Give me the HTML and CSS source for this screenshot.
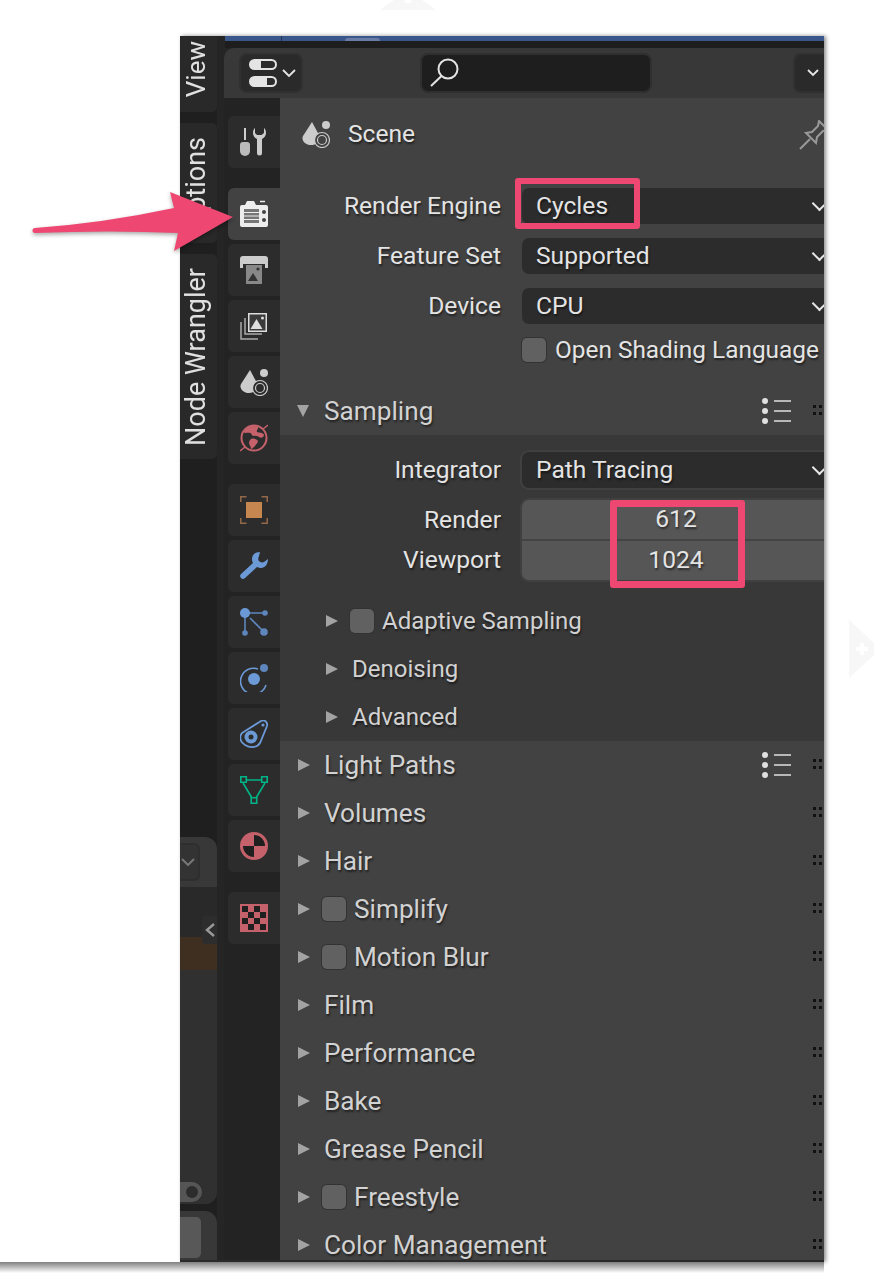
FILE: index.html
```html
<!DOCTYPE html>
<html lang="en">
<head>
  <meta charset="UTF-8" />
  <title>Render properties</title>
  <link rel="stylesheet" href="styles.css">
</head>
<body>

  <div class="window">
    <!-- left strip of the viewport sidebar -->
    <aside class="side">
      <div class="vtab vtab-view"><span>View</span></div>
      <div class="vtab vtab-options"><span>Options</span></div>
      <div class="vtab vtab-wrangler"><span>Node Wrangler</span></div>
      <div class="side-fill"></div>
      <div class="lower">
        <div class="lower-head"><div class="lower-select"><svg width="14" height="8" viewBox="0 0 14 8"><path d="M1 1l6 6 6-6" fill="none" stroke="#777" stroke-width="2"/></svg></div></div>
        <div class="lower-list">
          <div class="lower-gap"></div>
          <div class="lower-orange"></div>
          <div class="lower-rest"></div>
          <div class="lower-arrow"><svg width="12" height="16" viewBox="0 0 12 16"><path d="M10 2L3 8l7 6" fill="none" stroke="#999" stroke-width="2.4"/></svg></div>
          <div class="lower-toggle"></div>
        </div>
      </div>
      <div class="lower-btn"><div class="lower-btn-in"></div></div>
    </aside>

    <div class="props">
      <div class="topstrip"><i class="topstrip-tab"></i></div>
      <div class="topbar">
        <div class="editor-btn">
          <svg width="28" height="28" viewBox="0 0 28 28">
            <path d="M5.500 0h17a5.500 5.500 0 0 1 0 11h-17a5.500 5.500 0 0 1 0-11z" fill="#e4e4e4"/>
            <path d="M12 2h10.500a3.500 3.500 0 0 1 0 7H12z" fill="#2c2c2c"/>
            <path d="M5.500 17h17a5.500 5.500 0 0 1 0 11h-17a5.500 5.500 0 0 1 0-11z" fill="#e4e4e4"/>
            <path d="M18 19h4.500a3.500 3.500 0 0 1 0 7H18z" fill="#2c2c2c"/>
          </svg>
          <svg class="chev-small" width="14" height="9" viewBox="0 0 14 9"><path d="M1 1l6 6 6-6" fill="none" stroke="#e6e6e6" stroke-width="1.800"/></svg>
        </div>
        <div class="search">
          <svg width="30" height="30" viewBox="0 0 30 30"><circle cx="18" cy="11" r="9.500" fill="none" stroke="#e4e4e4" stroke-width="2"/><path d="M11.500 18L1 28" stroke="#e4e4e4" stroke-width="2" fill="none"/></svg>
        </div>
        <div class="options-btn"><svg width="12" height="8" viewBox="0 0 12 8"><path d="M1 1l5 5 5-5" fill="none" stroke="#e6e6e6" stroke-width="1.800"/></svg></div>
      </div>

      <div class="props-body">
        <nav class="tabs">
          <a class="tab tab-tool">
            <svg width="28" height="28" viewBox="0 0 28 28"><path d="M5 0v12" stroke="#ccc" stroke-width="2"/><path d="M0 17a3 3 0 0 1 3-3h4a3 3 0 0 1 3 3v6a5 5 0 0 1-10 0z" fill="#bbb"/><path d="M15 0c-1.500 1-2 3-2 5 0 3 2 5 4 6v14a2.500 2.500 0 0 0 5 0V11c2-1 4-3 4-6 0-2-.5-4-2-5v5l-2.500 2h-4.500L15 5z" fill="#ccc"/></svg>
          </a>
          <a class="tab tab-active">
            <svg width="28" height="28" viewBox="0 0 28 28"><path d="M0 7a2 2 0 0 1 2-2h3l2-4h7l2 4h10a2 2 0 0 1 2 2v18a2 2 0 0 1-2 2H2a2 2 0 0 1-2-2z" fill="#ededed"/><path d="M20 1.500h5" stroke="#ededed" stroke-width="1.500"/><rect x="4" y="9" width="15" height="14" fill="#777"/><path d="M4 12.500h15M4 16h15M4 19.500h15" stroke="#ededed" stroke-width="1.200"/><circle cx="24" cy="12" r="2" fill="#444"/><circle cx="24" cy="20" r="2" fill="#444"/></svg>
          </a>
          <a class="tab">
            <svg width="28" height="28" viewBox="0 0 28 28"><path d="M0 3a3 3 0 0 1 3-3h22a3 3 0 0 1 3 3v9h-3V7H3v5H0z" fill="#ccc"/><rect x="0" y="3" width="28" height="5" fill="#ccc"/><rect x="6" y="9" width="16" height="19" fill="#888"/><path d="M8 25l5-8 5 8z" fill="#333"/><circle cx="18" cy="13" r="1.600" fill="#333"/></svg>
          </a>
          <a class="tab">
            <svg width="28" height="28" viewBox="0 0 28 28"><rect x="8" y="1" width="19" height="19" fill="#ddd"/><rect x="9.500" y="2.500" width="16" height="16" fill="#3a3a3a"/><path d="M10.500 17l6-10 6 10z" fill="#ddd"/><circle cx="22.500" cy="6" r="1.500" fill="#ddd"/><path d="M5 6v16h17M1 10v17h17" fill="none" stroke="#aaa" stroke-width="1.500"/></svg>
          </a>
          <a class="tab">
            <svg width="28" height="28" viewBox="0 0 28 28"><path d="M10 2l7 13c1 5-2 10-8 10-6 0-10-5-8-9z" fill="#ccc"/><circle cx="24" cy="5" r="4" fill="#ccc"/><circle cx="20" cy="20" r="7.500" fill="#2c2c2c" stroke="#ccc" stroke-width="1.200"/><circle cx="20" cy="20" r="4.500" fill="none" stroke="#ccc" stroke-width="1.200"/></svg>
          </a>
          <a class="tab">
            <svg width="28" height="28" viewBox="0 0 28 28"><circle cx="14" cy="14" r="12.500" fill="none" stroke="#c5616b" stroke-width="2"/><path d="M23 5l5-4M5 23l-5 4" stroke="#c5616b" stroke-width="1.500"/><path d="M6 4c3-2 8-3 12-1 1 2-2 3-1 5 2 1 6 0 7 3 0 2-2 2-3 3-2-1-5-3-8-2-2-1-1-3-3-3-2-1-5 1-6-1 0-2 1-3 2-4zM11 15c3-1 6 0 7 2 0 2-2 3-3 5-2 2-3 3-4 3 0-3-2-4-2-6 0-2 1-3 2-4z" fill="#c5616b"/></svg>
          </a>
          <a class="tab tab-gap">
            <svg width="28" height="28" viewBox="0 0 28 28"><path d="M.800 6V.800H6.500M21.500 .800h5.700V6M27.200 22v5.200h-5.700M6.500 27.200H.800V22" fill="none" stroke="#94694a" stroke-width="1.500"/><rect x="6" y="6" width="16" height="16" fill="#c6864f"/></svg>
          </a>
          <a class="tab">
            <svg width="28" height="28" viewBox="0 0 28 28"><path d="M20 0c-5 0-8 3-8 7 0 2 .5 3 1 4L1 22a3 3 0 0 0 0 4 3 3 0 0 0 4 0l12-11c1 .5 3 1 4 1 4 0 7-4 7-9l-4 3c-2 1-4 0-5-1s-1-3 0-5z" fill="#6b9ad6"/></svg>
          </a>
          <a class="tab">
            <svg width="28" height="28" viewBox="0 0 28 28"><path d="M6 5h20M5 6v18M10 10l14 14" stroke="#5e86bd" stroke-width="1.600" fill="none"/><circle cx="5" cy="5" r="5" fill="#6b9ad6"/><circle cx="25" cy="5" r="2.800" fill="#5e86bd"/><circle cx="5" cy="25" r="2.800" fill="#5e86bd"/><circle cx="24" cy="24" r="3.800" fill="#5e86bd"/></svg>
          </a>
          <a class="tab">
            <svg width="28" height="28" viewBox="0 0 28 28"><path d="M18 5A13 13 0 1 0 26 21" fill="none" stroke="#6b9ad6" stroke-width="1.600"/><circle cx="14" cy="15" r="6" fill="#6b9ad6"/><circle cx="24" cy="4" r="4" fill="#5e86bd"/></svg>
          </a>
          <a class="tab">
            <svg width="28" height="28" viewBox="0 0 28 28"><path d="M2 13L21 1c3-2 7 1 6 5L20 23c-3 5-10 5-15 2S-1 17 2 13z" fill="#2c2c2c" stroke="#6b9ad6" stroke-width="1.800"/><circle cx="11" cy="17" r="6.500" fill="#6b9ad6"/><circle cx="11" cy="17" r="2.500" fill="#2c2c2c"/><circle cx="23" cy="5" r="1.600" fill="#6b9ad6"/></svg>
          </a>
          <a class="tab">
            <svg width="28" height="28" viewBox="0 0 28 28"><path d="M6 4h16M3 7l9 15M25 7l-9 15" stroke="#00b488" stroke-width="1.600" fill="none"/><path d="M.800 .800h5.500v5.500H.800zM21.700 .800h5.500v5.500h-5.500zM11.200 21.700h5.500v5.500h-5.500z" fill="none" stroke="#00b488" stroke-width="1.600"/></svg>
          </a>
          <a class="tab">
            <svg width="28" height="28" viewBox="0 0 28 28"><circle cx="14" cy="14" r="14" fill="#c5616b"/><path d="M14 14V3a11 11 0 0 1 11 11zM14 14H3a11 11 0 0 0 11 11z" fill="#1f1f1f"/></svg>
          </a>
          <a class="tab tab-gap">
            <svg width="28" height="28" viewBox="0 0 28 28"><rect width="28" height="28" fill="#c5616b"/><path d="M2 2h6v6H2zM14 2h6v6h-6zM8 8h6v6H8zM20 8h6v6h-6zM2 14h6v6H2zM14 14h6v6h-6zM8 20h6v6H8zM20 20h6v6h-6z" fill="#1f1f1f"/></svg>
          </a>
        </nav>

        <main class="panel">
          <div class="context">
            <svg width="28" height="28" viewBox="0 0 28 28"><path d="M10 2l7 13c1 5-2 10-8 10-6 0-10-5-8-9z" fill="#ccc"/><circle cx="24" cy="5" r="4" fill="#ccc"/><circle cx="20" cy="20" r="7.500" fill="#424242" stroke="#ccc" stroke-width="1.200"/><circle cx="20" cy="20" r="4.500" fill="none" stroke="#ccc" stroke-width="1.200"/></svg>
            <span class="context-name">Scene</span>
            <svg class="pin" width="30" height="30" viewBox="0 0 30 30"><path d="M20 1l9 9-5 1-6 6-1 6-10-10 6-1 6-6z" fill="none" stroke="#999" stroke-width="2"/><path d="M11 19L1 29" stroke="#999" stroke-width="2"/></svg>
          </div>

          <div class="form form-engine">
            <div class="row"><label>Render Engine</label><div class="select"><span>Cycles</span></div></div>
            <div class="row"><label>Feature Set</label><div class="select"><span>Supported</span></div></div>
            <div class="row"><label>Device</label><div class="select"><span>CPU</span></div></div>
            <div class="row-check"><i class="check"></i><span>Open Shading Language</span></div>
          </div>

          <div class="head head-open">
            <i class="tri tri-down"></i><span>Sampling</span>
            <span class="presets"><i></i><i></i><i></i></span><i class="grip"></i>
          </div>
          <div class="sub">
            <div class="row"><label>Integrator</label><div class="select"><span>Path Tracing</span></div></div>
            <div class="numbers">
              <div class="num-labels"><label>Render</label><label>Viewport</label></div>
              <div class="num-box"><div class="num">612</div><div class="num">1024</div></div>
            </div>
            <div class="subhead subhead-first"><i class="tri"></i><i class="check"></i><span>Adaptive Sampling</span></div>
            <div class="subhead"><i class="tri"></i><span>Denoising</span></div>
            <div class="subhead"><i class="tri"></i><span>Advanced</span></div>
          </div>

          <div class="head"><i class="tri"></i><span>Light Paths</span><span class="presets"><i></i><i></i><i></i></span><i class="grip"></i></div>
          <div class="head"><i class="tri"></i><span>Volumes</span><i class="grip"></i></div>
          <div class="head"><i class="tri"></i><span>Hair</span><i class="grip"></i></div>
          <div class="head head-check"><i class="tri"></i><i class="check"></i><span>Simplify</span><i class="grip"></i></div>
          <div class="head head-check"><i class="tri"></i><i class="check"></i><span>Motion Blur</span><i class="grip"></i></div>
          <div class="head"><i class="tri"></i><span>Film</span><i class="grip"></i></div>
          <div class="head"><i class="tri"></i><span>Performance</span><i class="grip"></i></div>
          <div class="head"><i class="tri"></i><span>Bake</span><i class="grip"></i></div>
          <div class="head"><i class="tri"></i><span>Grease Pencil</span><i class="grip"></i></div>
          <div class="head head-check"><i class="tri"></i><i class="check"></i><span>Freestyle</span><i class="grip"></i></div>
          <div class="head"><i class="tri"></i><span>Color Management</span><i class="grip"></i></div>
        </main>
      </div>
    </div>
  </div>

  <!-- annotations on top of the screenshot -->
  <div class="mark mark-engine"></div>
  <div class="mark mark-samples"></div>
  <svg class="arrow" width="210" height="70" viewBox="0 0 210 70"><path d="M5 40Q74 35 144 20L140 4 203 29 144 63 148 45Q81 42 5 45a2.500 2.500 0 0 1 0-5z" fill="#ee4771"/></svg>

  <!-- faint page decorations -->
  <div class="bottom-shadow"></div>
  <svg class="deco-top" width="56" height="10" viewBox="0 0 56 10"><path d="M14 0h28l14 10H0z" fill="#f7f7f7"/><path d="M25 0h6v3h-6z" fill="#fff"/></svg>
  <svg class="deco-right" width="26" height="58" viewBox="0 0 26 58"><path d="M0 0l25 23v12L0 58z" fill="#f7f7f7"/><path d="M7 27h4v-4h4v4h4v4h-4v4h-4v-4H7z" fill="#fff"/></svg>

</body>
</html>
```

FILE: styles.css
```css
* {
  box-sizing: border-box;
  margin: 0;
  padding: 0;
}

html, body {
  height: 100%;
}

body {
  background: #fff;
  font-family: Roboto, sans-serif;
  color: #e4e4e4;
  overflow: hidden;
  position: relative;
  padding: 36px 50px 14px 180px;
}

/* Window */
.window {
  width: 644px;
  height: 1226px;
  background: #252525;
  border-bottom: 2px solid #2a2a2a;
  display: flex;
  overflow: hidden;
  box-shadow: 2px 0 4px rgba(0,0,0,0.45);
}

/* Left strip */
.side {
  width: 37px;
  flex: none;
  display: flex;
  flex-direction: column;
  background: #1f1f1f;
}
.vtab {
  flex: none;
  background: #292929;
  border-radius: 0 0 5px 0;
  display: flex;
  align-items: center;
  justify-content: center;
  padding-right: 6px;
  overflow: hidden;
}
.vtab span {
  writing-mode: vertical-rl;
  transform: rotate(180deg);
  font-size: 27px;
  white-space: nowrap;
  color: #e0e0e0;
}
.vtab-view {
  height: 76px;
  align-items: flex-start;
  padding-top: 5px;
}
.vtab-view span {
  font-size: 26px;
}
.vtab-options {
  height: 120px;
  margin-top: 11px;
  border-radius: 0 5px 5px 0;
  align-items: flex-start;
  padding-top: 14px;
}
.vtab-wrangler {
  height: 205px;
  margin-top: 11px;
  border-radius: 0 5px 5px 0;
}
.side-fill {
  height: 378px;
  flex: none;
}
.lower {
  height: 367px;
  flex: none;
  background: #383838;
  border-radius: 0 12px 12px 0;
  display: flex;
  flex-direction: column;
  overflow: hidden;
}
.lower-head {
  height: 50px;
  flex: none;
  padding-top: 6px;
}
.lower-select {
  width: 20px;
  height: 38px;
  background: #333;
  border: 2px solid #2e2e2e;
  border-left: 0;
  border-radius: 0 6px 6px 0;
  display: flex;
  align-items: center;
  padding-left: 1px;
}
.lower-list {
  flex: 1;
  background: #292929;
  position: relative;
  display: flex;
  flex-direction: column;
}
.lower-gap {
  height: 50px;
  flex: none;
}
.lower-orange {
  height: 33px;
  flex: none;
  background: #3f2f20;
}
.lower-rest {
  flex: 1;
  background: #303030;
}
.lower-arrow {
  position: absolute;
  left: 22px;
  top: 29px;
  width: 15px;
  height: 28px;
  background: #2d2d2d;
  border-radius: 4px 0 0 4px;
  display: flex;
  align-items: center;
  justify-content: center;
}
.lower-toggle {
  position: absolute;
  left: 0;
  bottom: 2px;
  width: 22px;
  height: 20px;
  background: #555;
  border-radius: 0 10px 10px 0;
}
.lower-toggle::after {
  content: "";
  position: absolute;
  left: 6px;
  top: 4px;
  width: 12px;
  height: 12px;
  border-radius: 50%;
  background: #2c2c2c;
}
.lower-btn {
  height: 49px;
  margin-top: 7px;
  flex: none;
  background: #383838;
  border-radius: 0 12px 0 0;
  padding: 6px 0 2px;
}
.lower-btn-in {
  width: 21px;
  height: 41px;
  background: #585858;
  border-radius: 0 5px 5px 0;
}

/* Properties editor */
.props {
  flex: 1;
  min-width: 0;
  margin-left: 7px;
  display: flex;
  flex-direction: column;
}
.topstrip {
  height: 12px;
  flex: none;
  background: #1d1d1d;
  border-top: 5px solid #3a578c;
  margin-left: 1px;
  position: relative;
}
.topstrip::before {
  content: "";
  position: absolute;
  left: 56px;
  top: -5px;
  width: 1px;
  height: 5px;
  background: #24324d;
}
.topstrip-tab {
  position: absolute;
  left: 120px;
  top: -3px;
  width: 35px;
  height: 3px;
  background: #6a7da6;
  border-radius: 6px 6px 0 0;
}
.topbar {
  height: 50px;
  flex: none;
  background: #383838;
  border-radius: 10px 0 0 0;
  display: flex;
  align-items: center;
  padding-left: 15px;
}
.editor-btn {
  width: 64px;
  height: 40px;
  background: #2a2a2a;
  border: 2px solid #303030;
  border-radius: 8px;
  display: flex;
  align-items: center;
  padding-left: 8px;
  gap: 5px;
}
.search {
  width: 232px;
  height: 40px;
  margin-left: 117px;
  background: #1e1e1e;
  border: 2px solid #2f2f2f;
  border-radius: 8px;
  display: flex;
  align-items: center;
  padding-left: 8px;
}
.options-btn {
  flex: 1;
  height: 40px;
  margin-left: 141px;
  background: #2a2a2a;
  border: 2px solid #303030;
  border-right: 0;
  border-radius: 8px 0 0 8px;
  display: flex;
  align-items: center;
  padding-left: 12px;
}
.props-body {
  flex: 1;
  display: flex;
  min-height: 0;
}

/* Icon tabs */
.tabs {
  width: 56px;
  flex: none;
  display: flex;
  flex-direction: column;
  gap: 4px;
  padding: 18px 0 0 4px;
  background: #232323;
}
.tab {
  height: 52px;
  background: #2c2c2c;
  border-radius: 6px 0 0 6px;
  display: flex;
  align-items: center;
  padding-left: 12px;
}
.tab-active {
  background: #424242;
  margin-top: 16px;
}
.tab-gap {
  margin-top: 16px;
}

/* Main panel */
.panel {
  flex: 1;
  min-width: 0;
  background: #424242;
  overflow: hidden;
  font-size: 24.6px;
  text-shadow: 1px 2px 2px rgba(0,0,0,0.5);
}
.context {
  height: 72px;
  display: flex;
  align-items: center;
  padding-left: 22px;
  position: relative;
}
.context-name {
  margin-left: 18px;
  padding-bottom: 2px;
  color: #e4e4e4;
}
.pin {
  position: absolute;
  left: 519px;
  top: 22px;
}
.form-engine {
  padding-top: 18px;
}
.row {
  display: flex;
  align-items: center;
  height: 36px;
  margin-bottom: 14px;
}
.row label,
.num-labels label {
  width: 221px;
  flex: none;
  text-align: right;
  color: #e4e4e4;
}
.row label,
.select span,
.row-check span {
  padding-bottom: 2px;
}
.select {
  flex: 1;
  height: 36px;
  margin-left: 21px;
  background: #2c2c2c;
  border-radius: 7px 0 0 7px;
  display: flex;
  align-items: center;
  padding-left: 14px;
  position: relative;
}
.select::after {
  content: "";
  position: absolute;
  right: -1px;
  top: 10px;
  width: 9px;
  height: 9px;
  border-right: 2px solid #e6e6e6;
  border-bottom: 2px solid #e6e6e6;
  transform: rotate(45deg);
}
.sub .select {
  box-shadow: 0 0 0 2px #404040;
}
.row-check {
  display: flex;
  align-items: center;
  height: 24px;
  margin-left: 242px;
  gap: 9px;
  font-size: 24.4px;
  white-space: nowrap;
}
.check {
  width: 24px;
  height: 24px;
  flex: none;
  background: #616161;
  border-radius: 5px;
  box-shadow: 0 0 0 1px #333;
}

/* Panel headers */
.head {
  height: 48px;
  display: flex;
  align-items: center;
  padding-left: 18px;
  font-size: 26.2px;
  color: #d2d2d2;
  position: relative;
  white-space: nowrap;
}
.head-open {
  margin-top: 25px;
}
.head > span:first-of-type {
  margin-left: 14px;
}
.head-check .check {
  margin-left: 12px;
}
.head-check > span:first-of-type {
  margin-left: 8px;
}
.tri {
  width: 0;
  height: 0;
  flex: none;
  border-left: 12px solid #a3a3a3;
  border-top: 6.500px solid transparent;
  border-bottom: 6.500px solid transparent;
}
.tri-down {
  margin-left: -1px;
  margin-right: 1px;
  border-top: 12px solid #a3a3a3;
  border-left: 6.500px solid transparent;
  border-right: 6.500px solid transparent;
  border-bottom: 0;
}
.presets {
  position: absolute;
  left: 482px;
  top: 11px;
  width: 29px;
  height: 26px;
  display: flex;
  flex-direction: column;
  justify-content: space-between;
}
.presets i {
  display: block;
  height: 2px;
  margin: 2px 0 2px 12px;
  background: #b8b8b8;
  position: relative;
}
.presets i::before {
  content: "";
  position: absolute;
  left: -12px;
  top: -2px;
  width: 6px;
  height: 6px;
  border-radius: 50%;
  background: #e0e0e0;
}
.grip {
  position: absolute;
  left: 533px;
  top: 18px;
  width: 9px;
  height: 10px;
  background:
    linear-gradient(#111, #111) 0 0 / 3px 3px no-repeat,
    linear-gradient(#111, #111) 6px 0 / 3px 3px no-repeat,
    linear-gradient(#111, #111) 0 7px / 3px 3px no-repeat,
    linear-gradient(#111, #111) 6px 7px / 3px 3px no-repeat;
}

/* Open subpanel */
.sub {
  background: #383838;
  padding-top: 17px;
}
.numbers {
  display: flex;
  height: 80px;
  margin-top: -2px;
}
.num-labels {
  width: 221px;
  flex: none;
  display: flex;
  flex-direction: column;
}
.num-labels label {
  height: 40px;
  line-height: 40px;
}
.num-box {
  flex: 1;
  margin-left: 21px;
  border-radius: 7px 0 0 7px;
  overflow: hidden;
  display: flex;
  flex-direction: column;
  gap: 2px;
  background: #444;
  box-shadow: 0 0 0 2px #404040;
}
.num {
  flex: 1;
  background: #565656;
  text-align: center;
  line-height: 38px;
  padding-left: 6px;
  color: #e4e4e4;
}
.subhead {
  height: 48px;
  display: flex;
  align-items: center;
  padding-left: 46px;
  font-size: 24px;
  color: #d2d2d2;
  white-space: nowrap;
}
.subhead > span {
  margin-left: 14px;
}
.subhead .check {
  margin-left: 12px;
}
.subhead .check + span {
  margin-left: 8px;
}
.subhead-first {
  margin-top: 17px;
}

/* Annotations */
.mark {
  position: absolute;
  border: 6px solid #ee4771;
  border-radius: 3px;
}
.mark-engine {
  left: 515px;
  top: 178px;
  width: 125px;
  height: 51px;
}
.mark-samples {
  left: 610px;
  top: 500px;
  width: 135px;
  height: 88px;
  border-width: 7px;
}
.arrow {
  position: absolute;
  left: 30px;
  top: 188px;
  filter: drop-shadow(0 2px 2px rgba(0,0,0,0.35));
}
.bottom-shadow {
  position: absolute;
  left: 0;
  top: 1262px;
  width: 824px;
  height: 11px;
  background: linear-gradient(#808080, #fff);
}
.deco-top {
  position: absolute;
  left: 380px;
  top: 0;
}
.deco-right {
  position: absolute;
  left: 849px;
  top: 620px;
}
```
